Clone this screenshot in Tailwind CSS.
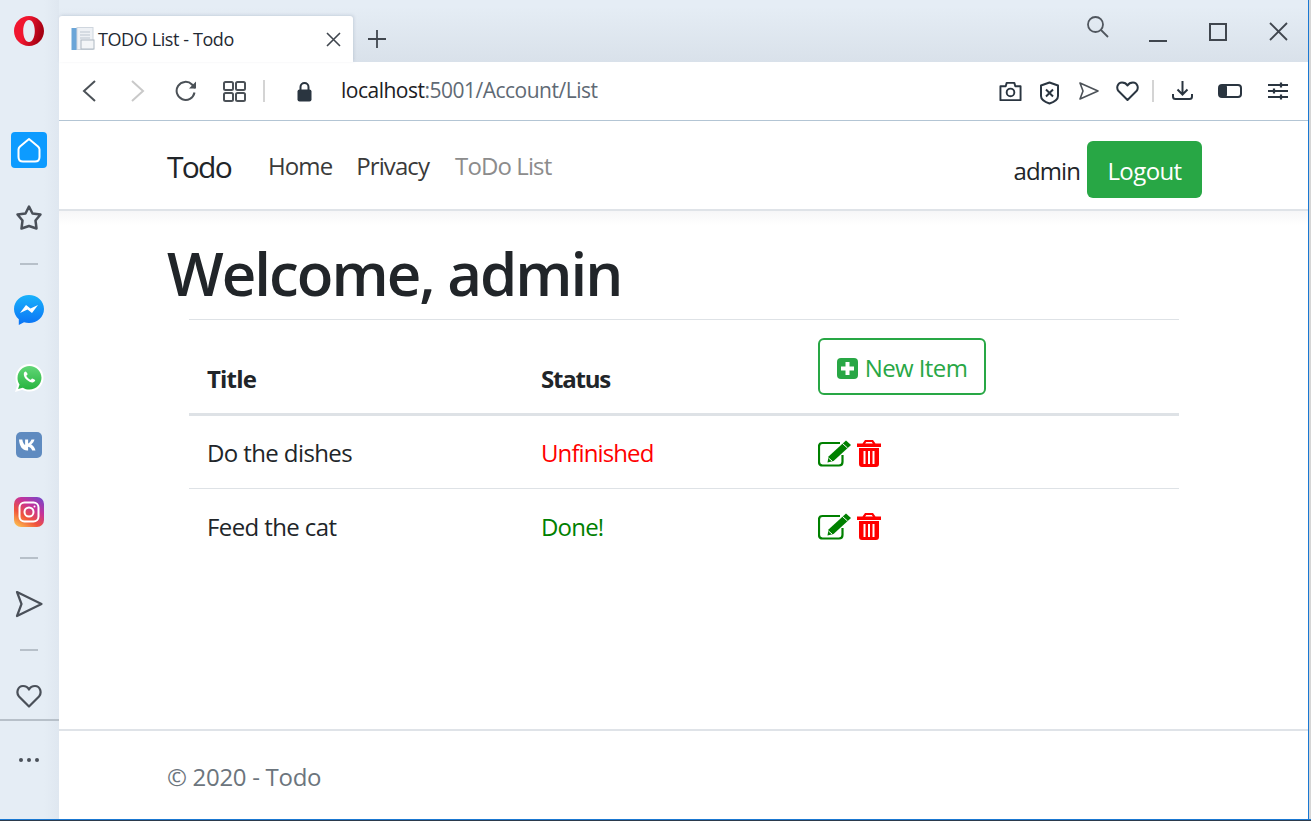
<!DOCTYPE html>
<html lang="en">
<head>
    <meta charset="UTF-8">
    <title>TODO List - Todo</title>
    <script src="https://cdn.jsdelivr.net/npm/@tailwindcss/browser@4"></script>
</head>
<body class="bg-[#d6d6d6] overflow-hidden font-['Open_Sans',sans-serif]">
<div class="flex flex-col h-[821px] w-[1311px]">
<div class="flex h-[819px] shrink-0">

    <!-- Opera sidebar -->
    <aside class="w-[59px] shrink-0 flex flex-col items-center pr-[1px] bg-[linear-gradient(90deg,#e5edf5_75%,#dfe7f0)]">
        <svg class="mt-[16px] w-[30px] h-[30px]" viewBox="0 0 30 30">
            <defs><linearGradient id="op" x1="0" y1="0" x2="1" y2="0.3"><stop offset="0.45" stop-color="#f0162f"/><stop offset="1" stop-color="#a50012"/></linearGradient></defs>
            <path fill="url(#op)" fill-rule="evenodd" d="M15 0C6.700 0 0 6.700 0 15s6.700 15 15 15 15-6.700 15-15S23.300 0 15 0zM15 4c3.400 0 5.800 4.900 5.800 11S18.400 26 15 26 9.200 21.100 9.200 15 11.600 4 15 4z"/>
        </svg>

        <div class="mt-[86px] w-9 h-9 rounded-[4px] bg-[#0d9bff] flex items-center justify-center">
            <svg class="w-[24px] h-[26px]" viewBox="0 0 24 26" fill="none" stroke="#fff" stroke-width="2">
                <path d="M12 2 L21 9.500 Q22.500 11 22.500 12.500 V20 Q22.500 24.500 18 24.500 H6 Q1.500 24.500 1.500 20 V12.500 Q1.500 11 3 9.500 Z" stroke-linejoin="round"/>
            </svg>
        </div>

        <svg class="mt-[36px] w-[28px] h-[28px]" viewBox="0 0 28 28" fill="none" stroke="#4a5059" stroke-width="2.500" stroke-linejoin="round">
            <path d="M14 2.500 L17.500 9.500 L25.500 10.500 L20.500 16.500 L21.500 24.500 L14 22 L6.500 24.500 L7.500 16.500 L2.500 10.500 L10.500 9.500 Z"/>
        </svg>

        <div class="mt-[31px] w-[18px] h-[2px] bg-[#b7c0c9]"></div>

        <svg class="mt-[30px] w-[30px] h-[30px]" viewBox="0 0 30 30">
            <defs><linearGradient id="msg" x1="0" y1="0" x2="0" y2="1"><stop offset="0" stop-color="#19b2fb"/><stop offset="1" stop-color="#0a72f5"/></linearGradient></defs>
            <path fill="url(#msg)" d="M15 0C6.800 0 0 6 0 14c0 4.200 1.900 7.800 4.800 10.300V30l5.200-2.800c1.600 0.500 3.200 0.800 5 0.800 8.200 0 15-6 15-14S23.200 0 15 0z"/>
            <path fill="#fff" d="M6 18l6-8 4.500 3.500L24 10l-6 8-4.500-3.500z"/>
        </svg>

        <svg class="mt-[38px] w-[30px] h-[30px]" viewBox="0 0 30 30">
            <defs><linearGradient id="wa" x1="0" y1="0" x2="0" y2="1"><stop offset="0" stop-color="#62d677"/><stop offset="1" stop-color="#27b43f"/></linearGradient></defs>
            <path fill="#fff" d="M15.500 1C7.800 1 1.500 7.200 1.500 15c0 2.500 0.700 5 1.900 7L1 29l7.300-2.300c2.100 1.100 4.600 1.800 7.200 1.800 7.700 0 14-6.200 14-13.800S23.200 1 15.500 1z"/>
            <path fill="url(#wa)" d="M15.500 3C8.900 3 3.500 8.300 3.500 15c0 2.400 0.700 4.700 2 6.600l-1.400 4.500 4.700-1.400c1.900 1.200 4.200 1.900 6.700 1.900 6.600 0 12-5.300 12-11.800S22.100 3 15.500 3z"/>
            <path fill="#fff" d="M11.500 8.500c-0.500 0-1.500 0.900-1.700 2.200-0.200 2 1 4.300 2.900 6.100 2 1.900 4.400 2.900 6.200 2.600 1.200-0.200 2.300-1.300 2.300-2.100 0-0.400-2.600-1.900-3.100-1.800-0.500 0.200-0.900 1.300-1.500 1.300-1 0-4.200-2.800-4.200-4 0-0.500 1.100-1.100 1.200-1.600 0.100-0.500-1.400-2.700-2.100-2.700z"/>
        </svg>

        <div class="mt-[39px] w-[26px] h-[26px] rounded-[5px] bg-[#5f8bc0] flex items-center justify-center">
            <svg class="w-[20px] h-[12px]" viewBox="0 0 20 12"><path fill="#fff" d="M0 0.500h3.300c0.500 2.800 1.500 4.700 2.800 5.500V0.500h3v3.900C10.400 4 11.800 2.400 12.500 0.500h3c-0.500 2.300-2 4-3.300 5 1.400 0.800 3.500 2.700 4.300 6h-3.300c-0.600-2-2.100-3.500-4.100-3.800v3.800H8.200C3.500 11.500 0.500 7.500 0 0.500z"/></svg>
        </div>

        <div class="mt-[39px] w-[30px] h-[30px] rounded-[7px] bg-[linear-gradient(35deg,#fdc04f_5%,#f0543b_35%,#c5329a_65%,#6a4ad0_100%)] flex items-center justify-center">
            <svg class="w-[22px] h-[22px]" viewBox="0 0 22 22" fill="none" stroke="#fff" stroke-width="2">
                <rect x="1.500" y="1.500" width="19" height="19" rx="5"/>
                <circle cx="11" cy="11" r="4.500"/>
                <circle cx="16.500" cy="5.500" r="1" fill="#fff" stroke="none"/>
            </svg>
        </div>

        <div class="mt-[30px] w-[18px] h-[2px] bg-[#b7c0c9]"></div>

        <svg class="mt-[31px] w-[28px] h-[28px]" viewBox="0 0 28 28" fill="none" stroke="#4a5059" stroke-width="2.200" stroke-linejoin="round">
            <path d="M2 2 L26.500 14 L2 26 L6.500 14 Z"/>
        </svg>

        <div class="mt-[31px] w-[18px] h-[2px] bg-[#b7c0c9]"></div>

        <svg class="mt-[33px] w-[26px] h-[24px]" viewBox="0 0 26 24" fill="none" stroke="#4a5059" stroke-width="2.200" stroke-linejoin="round">
            <path d="M13 22.500 L3 12.500 C0 9 1.500 2 7 2 C10 2 12 3.500 13 5.500 C14 3.500 16 2 19 2 C24.500 2 26 9 23 12.500 Z"/>
        </svg>

        <div class="mt-[11px] self-start w-[59px] h-[2px] bg-[#b7c0c9]"></div>

        <div class="mt-[37px] flex gap-[4px]">
            <span class="w-[4px] h-[4px] rounded-full bg-[#4a5059]"></span>
            <span class="w-[4px] h-[4px] rounded-full bg-[#4a5059]"></span>
            <span class="w-[4px] h-[4px] rounded-full bg-[#4a5059]"></span>
        </div>
    </aside>

    <!-- Browser window -->
    <div class="w-[1249px] shrink-0 flex flex-col bg-white">

        <!-- Tab strip -->
        <div class="h-[62px] shrink-0 flex items-end bg-[linear-gradient(#e5edf5_10%,#d9e1ea)]">
            <div class="w-[294px] h-[46px] bg-white rounded-t-[3px] flex items-center pl-[12px] pr-[12px] shadow-[1px_-1px_3px_rgba(120,135,160,0.25)]">
                <svg class="w-[24px] h-[24px] shrink-0" viewBox="0 0 24 24">
                    <rect x="0.500" y="1" width="6" height="22" fill="#6aa5d8"/>
                    <rect x="6" y="0.500" width="16" height="22" fill="#eef1f5" stroke="#cfd6de"/>
                    <path d="M9 5h10M9 8h10M9 11h10" stroke="#bcc5cf"/>
                    <rect x="10" y="13" width="13" height="9" fill="#f3f5f7" stroke="#aeb8c2"/>
                </svg>
                <span class="ml-[3px] text-[18px] leading-none text-[#1f2933] tracking-[-0.4px]">TODO List - Todo</span>
                <svg class="ml-auto w-[15px] h-[15px]" viewBox="0 0 15 15" stroke="#40464e" stroke-width="1.600"><path d="M1 1L14 14M14 1L1 14"/></svg>
            </div>
            <svg class="ml-[15px] mb-[14px] w-[18px] h-[18px]" viewBox="0 0 18 18" stroke="#40464e" stroke-width="1.800"><path d="M9 0V18M0 9H18"/></svg>
            <div class="ml-auto flex items-center mb-[14px]">
                <svg class="mb-[10px] w-[23px] h-[23px]" viewBox="0 0 23 23" fill="none" stroke="#50565e" stroke-width="1.800"><circle cx="9.500" cy="9.500" r="7.500"/><path d="M15 15L22 22"/></svg>
                <svg class="ml-[40px] mt-[3px] w-[18px] h-[18px]" viewBox="0 0 18 18" stroke="#40464e" stroke-width="2"><path d="M0 17H18"/></svg>
                <svg class="ml-[42px] w-[18px] h-[18px]" viewBox="0 0 18 18" fill="none" stroke="#40464e" stroke-width="2"><rect x="1" y="1" width="16" height="16"/></svg>
                <svg class="ml-[42px] mr-[20px] w-[19px] h-[19px]" viewBox="0 0 19 19" stroke="#40464e" stroke-width="1.800"><path d="M1 1L18 18M18 1L1 18"/></svg>
            </div>
        </div>

        <!-- Address bar -->
        <div class="h-[59px] shrink-0 flex items-center border-b border-[#b3c5d4] pl-[23px] pr-[20px]">
            <svg class="w-[14px] h-[22px]" viewBox="0 0 14 22" fill="none" stroke="#4b5157" stroke-width="2"><path d="M13 1L2 11L13 21"/></svg>
            <svg class="ml-[35px] w-[14px] h-[22px]" viewBox="0 0 14 22" fill="none" stroke="#c9c9c9" stroke-width="2"><path d="M1 1L12 11L1 21"/></svg>
            <svg class="ml-[30px] w-[22px] h-[22px]" viewBox="0 0 22 22" fill="none" stroke="#4b5157" stroke-width="2"><path d="M19.500 12.500A9 9 0 1 1 17 4.500L20 8"/><path d="M21 1.500V8.500H14" fill="#4b5157" stroke="none"/></svg>
            <svg class="ml-[26px] w-[23px] h-[21px]" viewBox="0 0 23 21" fill="none" stroke="#4b5157" stroke-width="2"><rect x="1" y="1" width="9" height="8" rx="1.500"/><rect x="13" y="1" width="9" height="8" rx="1.500"/><rect x="1" y="12" width="9" height="8" rx="1.500"/><rect x="13" y="12" width="9" height="8" rx="1.500"/></svg>
            <div class="ml-[17px] w-[2px] h-[22px] bg-[#d4d4d4]"></div>
            <svg class="ml-[32px] w-[15px] h-[21px]" viewBox="0 0 15 21"><path fill="none" stroke="#2a3540" stroke-width="2" d="M3.500 9V6a4 4 0 0 1 8 0V9"/><rect x="0.500" y="8.500" width="14" height="12" rx="2" fill="#2a3540"/></svg>
            <div class="ml-[29px] text-[21px] tracking-[-0.5px] text-[#5f6a75]"><span class="text-[#1c2024]">localhost</span>:5001/Account/List</div>
            <div class="ml-auto flex items-center">
                <svg class="w-[23px] h-[21px]" viewBox="0 0 24 21" fill="none" stroke="#2a3540" stroke-width="2" stroke-linejoin="round"><path d="M1.500 5H7L8 1.500H16L17 5H22.500V19.500H1.500Z"/><circle cx="12" cy="11.500" r="4"/></svg>
                <svg class="ml-[18px] mt-[3px] w-[19px] h-[24px]" viewBox="0 0 19 24" fill="none" stroke="#2a3540" stroke-width="2" stroke-linejoin="round"><path d="M9.500 1.500L18 4.500V15C18 18 14 21 9.500 22.500C5 21 1 18 1 15V4.500Z"/><path d="M6 8.500L13 15.500M13 8.500L6 15.500"/></svg>
                <svg class="ml-[20px] w-[20px] h-[18px]" viewBox="0 0 20 18" fill="none" stroke="#4b5157" stroke-width="1.600" stroke-linejoin="round"><path d="M1 1L19 9L1 17L4 9Z"/></svg>
                <svg class="ml-[17px] w-[23px] h-[20px]" viewBox="0 0 23 20" fill="none" stroke="#2a3540" stroke-width="2" stroke-linejoin="round"><path d="M11.500 19L2.500 10C0 7 1.500 1.500 6 1.500C8.500 1.500 10.500 2.800 11.500 4.500C12.500 2.800 14.500 1.500 17 1.500C21.500 1.500 23 7 20.500 10Z"/></svg>
                <div class="ml-[13px] w-[2px] h-[22px] bg-[#d4d4d4]"></div>
                <svg class="ml-[18px] w-[21px] h-[20px]" viewBox="0 0 21 20" fill="none" stroke="#2a3540" stroke-width="2"><path d="M10.500 0V13M5.500 8.500L10.500 13.500L15.500 8.500"/><path d="M1 13V15.500Q1 18 3.500 18H17.500Q20 18 20 15.500V13"/></svg>
                <svg class="ml-[25px] w-[24px] h-[14px]" viewBox="0 0 24 14"><rect x="1" y="1" width="22" height="12" rx="3" fill="none" stroke="#2a3540" stroke-width="2"/><rect x="1" y="1" width="8" height="12" rx="2" fill="#2a3540"/></svg>
                <svg class="ml-[26px] w-[20px] h-[18px]" viewBox="0 0 20 18" stroke="#2a3540" stroke-width="1.800"><path d="M0 3H20M0 9H20M0 15H20"/><path d="M13 0.500V5.500M6 6.500V11.500M13 12.500V17.500" stroke-width="2.200"/></svg>
            </div>
        </div>

        <!-- Site navbar -->
        <nav class="h-[90px] shrink-0 flex items-center border-b-2 border-[#dfe3e8] pl-[108px] pr-[106px] text-[24px] tracking-[-0.9px]">
            <a class="mt-[2px] text-[30px] text-[#212529] tracking-[-1.750px]">Todo</a>
            <a class="ml-[37px] mt-[2px] text-[#3a3a3a]">Home</a>
            <a class="ml-[24px] mt-[2px] text-[#3a3a3a]">Privacy</a>
            <a class="ml-[26px] mt-[2px] text-[#8c8c8c]">ToDo List</a>
            <span class="ml-auto mt-[12px] text-[#212529]">admin</span>
            <a class="ml-[7px] mt-[8px] pt-[3px] w-[115px] h-[57px] flex items-center justify-center rounded-[6px] bg-[#28a745] text-white tracking-[-0.6px]">Logout</a>
        </nav>

        <!-- Page content -->
        <main class="flex-1 pt-[26px] bg-[linear-gradient(#f6f6f8,#fff_14px)]">
            <h1 class="pl-[108px] text-[60px] leading-[72px] font-semibold text-[#212529] tracking-[-2px]">Welcome, admin</h1>

            <table class="ml-[130px] mt-[10px] w-[990px] table-fixed text-[24px] tracking-[-0.6px] text-[#212529]">
                <thead>
                    <tr class="h-[95px] border-t border-b-[3px] border-t-[#dee2e6] border-b-[#dee2e6] text-left">
                        <th class="w-[333px] pl-[18px] pt-[24px] align-middle font-bold tracking-[-0.8px]">Title</th>
                        <th class="w-[278px] pl-[19px] pt-[24px] align-middle font-bold tracking-[-1.200px]">Status</th>
                        <th class="pl-[18px] align-middle font-normal">
                            <a class="inline-flex items-center justify-center pt-[3px] w-[168px] h-[57px] rounded-[6px] border-2 border-[#28a745] text-[#28a745]">
                                <svg class="w-[21px] h-[21px] mr-[7px]" viewBox="0 0 21 21">
                                    <rect width="21" height="21" rx="4" fill="#28a745"/>
                                    <path d="M10.500 4V17M4 10.500H17" stroke="#fff" stroke-width="4"/>
                                </svg>
                                New Item
                            </a>
                        </th>
                    </tr>
                </thead>
                <tbody>
                    <tr class="h-[74px] border-b border-[#dee2e6]">
                        <td class="pl-[18px] pt-[2px]">Do the dishes</td>
                        <td class="pl-[19px] pt-[2px] text-[#ff0000] tracking-[-0.9px]">Unfinished</td>
                        <td class="pl-[18px] pt-[2px]">
                            <div class="flex items-center gap-[6px]">
                                <svg class="w-[33px] h-[27px]" viewBox="0 0 33 27">
                                    <path d="M24.500 15V22Q24.500 25.500 21 25.500H4.500Q1 25.500 1 22V6.500Q1 3 4.500 3H22" fill="none" stroke="#008000" stroke-width="2.200"/>
                                    <path fill="#008000" d="M28 0.500L33 5 15.500 21 9.500 22.500 10.500 16.500z"/>
                                    <path stroke="#fff" stroke-width="1" d="M24.500 3.500L29.500 8M10.500 18L14 21"/>
                                </svg>
                                <svg class="w-[24px] h-[27px]" viewBox="0 0 24 27">
                                    <path fill="#ff0000" fill-rule="evenodd" d="M8 0H16L18.500 3.500H24V7H0V3.500H5.500zM9.200 2L8.200 3.500H15.800L14.800 2zM2 8H22V24Q22 27 19 27H5Q2 27 2 24zM6.500 11V24H8.500V11zM11 11V24H13V11zM15.500 11V24H17.500V11z"/>
                                </svg>
                            </div>
                        </td>
                    </tr>
                    <tr class="h-[74px]">
                        <td class="pl-[18px] pt-[2px]">Feed the cat</td>
                        <td class="pl-[19px] pt-[2px] text-[#008000] tracking-[-0.8px]">Done!</td>
                        <td class="pl-[18px] pt-[2px]">
                            <div class="flex items-center gap-[6px]">
                                <svg class="w-[33px] h-[27px]" viewBox="0 0 33 27">
                                    <path d="M24.500 15V22Q24.500 25.500 21 25.500H4.500Q1 25.500 1 22V6.500Q1 3 4.500 3H22" fill="none" stroke="#008000" stroke-width="2.200"/>
                                    <path fill="#008000" d="M28 0.500L33 5 15.500 21 9.500 22.500 10.500 16.500z"/>
                                    <path stroke="#fff" stroke-width="1" d="M24.500 3.500L29.500 8M10.500 18L14 21"/>
                                </svg>
                                <svg class="w-[24px] h-[27px]" viewBox="0 0 24 27">
                                    <path fill="#ff0000" fill-rule="evenodd" d="M8 0H16L18.500 3.500H24V7H0V3.500H5.500zM9.200 2L8.200 3.500H15.800L14.800 2zM2 8H22V24Q22 27 19 27H5Q2 27 2 24zM6.500 11V24H8.500V11zM11 11V24H13V11zM15.500 11V24H17.500V11z"/>
                                </svg>
                            </div>
                        </td>
                    </tr>
                </tbody>
            </table>
        </main>

        <!-- Footer -->
        <footer class="h-[90px] shrink-0 border-t-2 border-[#dfe3e8] pl-[108px] pt-[28px] text-[24px] leading-[36px] tracking-[-0.3px] text-[#6c757d]">
            © 2020 - Todo
        </footer>
    </div>

    <!-- Window edge and what shows behind it -->
    <div class="w-[1px] shrink-0 bg-[#1a78d2]"></div>
</div>
<div class="h-[1px] shrink-0 bg-[#1a78d2]"></div>
<div class="h-[1px] shrink-0 bg-[#2b3a4c]"></div>
</div>
</body>
</html>
